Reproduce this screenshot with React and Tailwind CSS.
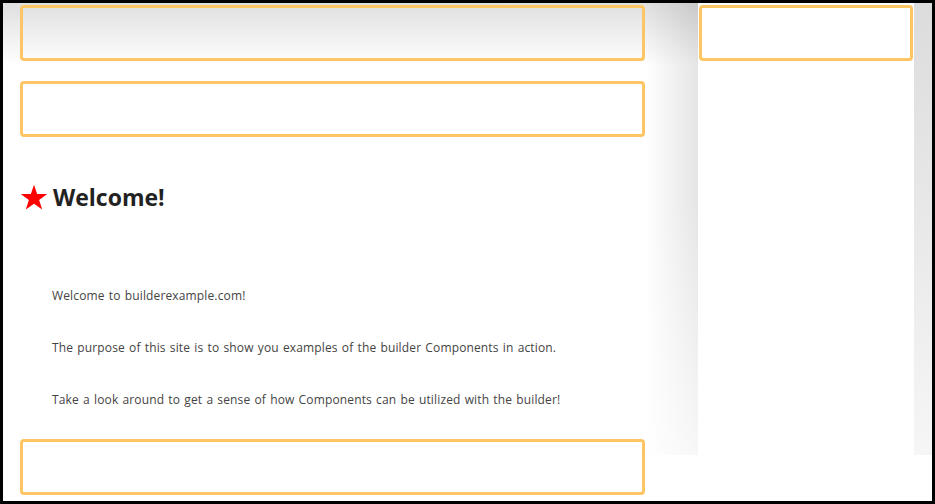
import React from 'react';

const Slot = ({ className = '' }) => (
  <div className={`h-[56px] rounded-[4px] border-[3px] border-[#fec564] ${className}`} />
);

const Star = () => (
  <svg width="28" height="27" viewBox="0 0 24 23" className="shrink-0">
    <path d="M12 0.5l2.7 8.1h8.6l-6.9 5 2.6 8.2L12 16.8l-7 5 2.6-8.2-6.9-5h8.6z" fill="#ff0000" />
  </svg>
);

const lines = [
  'Welcome to builderexample.com!',
  'The purpose of this site is to show you examples of the builder Components in action.',
  'Take a look around to get a sense of how Components can be utilized with the builder!'
];

export default function App() {
  return (
    <div className="h-[504px] w-[935px] border-[3px] border-black bg-white flex" style={{ fontFamily: '"Open Sans", sans-serif' }}>
      {/* main column */}
      <div className="w-[642px] pl-[17px] pt-[2px] bg-[linear-gradient(to_bottom,#dfdfdf,#ffffff_62px)]">
        <Slot />
        <Slot className="mt-[20px]" />

        <div className="mt-[44px] h-[32px] flex items-center gap-[5px]">
          <Star />
          <h1 className="text-[23px] font-bold text-[#222] leading-none">Welcome!</h1>
        </div>

        <div className="mt-[75px] pl-[32px] flex flex-col gap-[36px]">
          {lines.map(t => (
            <p key={t} className="h-4 text-[12px] leading-4 text-[#444] tracking-[0.14px] [word-spacing:0.9px]">{t}</p>
          ))}
        </div>

        <Slot className="mt-[31px] h-[55px]" />
      </div>

      {/* gutter */}
      <div className="w-[53px] h-[452px] bg-[linear-gradient(to_bottom,rgba(255,255,255,0)_200px,rgba(255,255,255,0.7)),linear-gradient(to_right,rgba(0,0,0,0),rgba(0,0,0,0.1)),linear-gradient(to_bottom,#dfdfdf,#ffffff_62px)]" />

      {/* sidebar */}
      <div className="w-[216px] px-[1px] pt-[2px] bg-white">
        <Slot />
      </div>

      <div className="w-[18px] h-[452px] bg-[linear-gradient(to_bottom,#dcdcdc,#f6f6f6)]" />
    </div>
  );
}
